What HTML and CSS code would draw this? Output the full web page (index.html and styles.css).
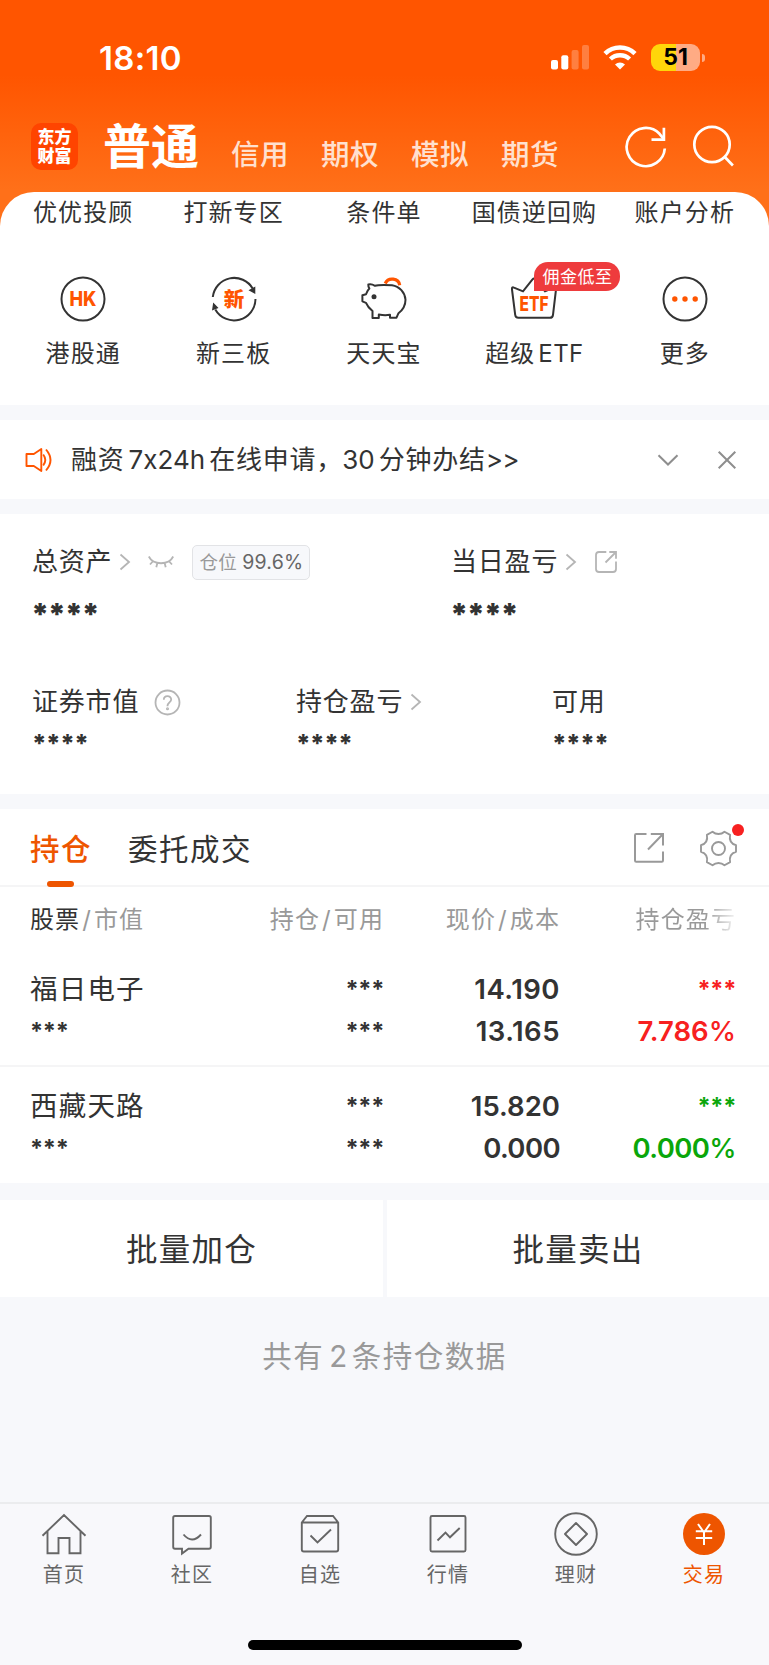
FILE: index.html
```html
<!DOCTYPE html>
<html lang="zh-CN">
<head>
<meta charset="utf-8">
<title>交易</title>
<link rel="stylesheet" href="styles.css">
</head>
<body>
<header class="top">
  <div class="status">
    <span class="clock">18:10</span>
    <svg class="signal" width="39" height="25" viewBox="0 0 39 25" fill="#fff"><rect x="0" y="15" width="7" height="9.5" rx="2"/><rect x="10.3" y="10.3" width="7" height="14.2" rx="2"/><rect x="20.6" y="5" width="7" height="19.5" rx="2" opacity=".25"/><rect x="31" y="0" width="7" height="24.5" rx="2" opacity=".25"/></svg>
    <svg class="wifi" width="34" height="25" viewBox="0 0 34 25" fill="none" stroke="#fff"><path d="M2 8.6a21.6 21.6 0 0 1 30 0" stroke-width="4.6"/><path d="M7.4 14a14 14 0 0 1 19.2 0" stroke-width="4.4"/><path d="M17 24.5l-5-5a7.2 7.2 0 0 1 10 0z" fill="#fff" stroke="none"/></svg>
    <div class="battery"><span>51</span></div>
    <i class="battery-tip"></i>
  </div>
  <nav class="accounts">
    <div class="logo"><span>东方</span><span>财富</span></div>
    <span class="account on">普通</span>
    <span class="account">信用</span>
    <span class="account">期权</span>
    <span class="account">模拟</span>
    <span class="account">期货</span>
    <svg class="refresh" width="44" height="44" viewBox="0 0 44 44" fill="none" stroke="#fff" stroke-width="2.7"><path d="M40.8 23.500A19.1 19.1 0 1 1 35.500 8.800L39.500 13.700"/><path d="M39.900 2.800V14.700H27.500"/></svg>
    <svg class="search" width="44" height="44" viewBox="0 0 44 44" fill="none" stroke="#fff" stroke-width="2.700"><circle cx="20" cy="19.500" r="17.700"/><path d="M32.300 31.500l8.600 9"/></svg>
  </nav>
</header>

<main>
  <section class="sheet">
    <div class="labels first"><span>优优投顾</span><span>打新专区</span><span>条件单</span><span>国债逆回购</span><span>账户分析</span></div>
    <div class="icons">
      <div><svg width="48" height="48" viewBox="0 0 48 48"><circle cx="24" cy="24" r="21.500" fill="none" stroke="#333" stroke-width="2"/><text class="hk" x="24" y="31.300" text-anchor="middle" textLength="27" lengthAdjust="spacingAndGlyphs">HK</text></svg></div>
      <div><svg width="48" height="48" viewBox="0 0 48 48"><g fill="none" stroke="#333" stroke-width="2"><path d="M2.800 22A21.500 21.500 0 0 1 42.700 13.500"/><path d="M45.500 24A21.500 21.500 0 0 1 5.300 34.500"/></g><path d="M45.300 11.500v7.500l-6.800-3.800zM2 35.500l1.200-8 5.300 5.500z" fill="#333"/><text class="xin" x="24" y="31.500" text-anchor="middle">新</text></svg></div>
      <div><svg width="48" height="48" viewBox="0 0 48 48" fill="none" stroke="#333" stroke-width="2" stroke-linejoin="round"><path d="M8.300 9.500c2.600-.6 4.600 0 6.700 1.300 3.500-1.300 10-1 17-.6 7.500 1 13 7.500 13.500 14.500 0 5.500-2.500 10-7 13.500l-2 4.500h-6.500v-2.900c-4 .7-7.700.4-11.200-.2v3.500h-6.300V36c-3-2.500-5.200-5-6.500-8.200l-3.600-1.500v-6l3.600-1c.7-2.300 1.600-4.200 3.400-5.800-.9-1.300-1.200-2.600-1.100-4z"/><circle cx="14" cy="21.800" r="2.500" fill="#333" stroke="none"/><path d="M25.200 8.500c3-6.600 13.500-5.500 14.500 1.800" stroke="#ff5500" stroke-width="3.200"/></svg></div>
      <div class="etf"><svg width="48" height="48" viewBox="0 0 48 48"><path d="M2 14.500q-.4-3 2-1.800l9 3.700 9.500-12q1.500-1.700 3 0l9.500 12 9-3.700q2.400-1.200 2 1.800l-3 25.300q-.3 3-3.200 3H8.400q-3 0-3.200-3z" fill="none" stroke="#333" stroke-width="2"/><text class="etf-text" x="24" y="35.500" text-anchor="middle" textLength="29" lengthAdjust="spacingAndGlyphs">ETF</text></svg><b class="badge">佣金低至</b></div>
      <div><svg width="48" height="48" viewBox="0 0 48 48"><circle cx="24" cy="24" r="21.500" fill="none" stroke="#333" stroke-width="2"/><g fill="#ff5500"><circle cx="13.800" cy="24" r="2.700"/><circle cx="24" cy="24" r="2.700"/><circle cx="34.200" cy="24" r="2.700"/></g></svg></div>
    </div>
    <div class="labels"><span>港股通</span><span>新三板</span><span>天天宝</span><span>超级<em>ETF</em></span><span>更多</span></div>
  </section>

  <section class="notice">
    <svg class="horn" width="28" height="26" viewBox="0 0 28 26" fill="none" stroke="#ff5500" stroke-width="1.900" stroke-linejoin="round"><path d="M1.500 7h7.300l7.500-5v22l-7.500-5H1.500z"/><path d="M18.200 7.500q4.200 5.500 0 11M21 2.500q9 10.500 0 21"/></svg>
    <p>融资<em>7x24h</em>在线申请，<em class="minutes">30</em>分钟办结<i>&gt;&gt;</i></p>
    <svg width="22" height="22" viewBox="0 0 22 22" fill="none" stroke="#8e8e8e" stroke-width="2"><path d="M1.500 6.300l9.500 9.200 9.500-9.200"/></svg>
    <svg class="close" width="22" height="22" viewBox="0 0 22 22" fill="none" stroke="#8e8e8e" stroke-width="2"><path d="M2.700 2.700l16.600 16.600M19.300 2.700L2.700 19.300"/></svg>
  </section>

  <section class="assets">
    <div class="pair">
      <div>
        <h3>总资产<svg class="chev" width="12" height="18" viewBox="0 0 12 18"><path d="M1.500 1.500l8.500 7.500-8.500 7.500"/></svg>
          <svg class="eye" width="26" height="14" viewBox="0 0 26 14"><path d="M.8 1.500c4.500 9 20 9 24.400 0M5.200 6l-3.200 3.500M9.300 8.200l-1 4M16.700 8.200l1 4M20.800 6l3.200 3.500"/></svg>
          <span class="tag">仓位 <b>99.6%</b></span></h3>
        <p class="stars big">****</p>
      </div>
      <div>
        <h3>当日盈亏<svg class="chev" width="12" height="18" viewBox="0 0 12 18"><path d="M1.500 1.500l8.500 7.500-8.500 7.500"/></svg>
          <svg class="share" width="24" height="24" viewBox="0 0 24 24"><path d="M12.300 2H5Q2 2 2 5v14q0 3 3 3h14q3 0 3-3v-7.500M15.300 2H22v6.800M22 2L11.500 12.500"/></svg></h3>
        <p class="stars big">****</p>
      </div>
    </div>
    <div class="triple">
      <div><h3>证券市值<svg class="help" width="27" height="27" viewBox="0 0 27 27"><circle cx="13.500" cy="13.500" r="12"/><path d="M9.800 10.800c0-5 7.400-4.800 7.400-.3 0 2.800-3.700 3-3.700 6.300v.5"/><circle cx="13.500" cy="19.800" r=".6"/></svg></h3><p class="stars">****</p></div>
      <div><h3>持仓盈亏<svg class="chev" width="12" height="18" viewBox="0 0 12 18"><path d="M1.500 1.500l8.500 7.500-8.500 7.500"/></svg></h3><p class="stars">****</p></div>
      <div><h3>可用</h3><p class="stars">****</p></div>
    </div>
  </section>

  <section class="holdings">
    <div class="tabs">
      <span class="tab on">持仓</span><span class="tab">委托成交</span>
      <svg class="export" width="32" height="32" viewBox="0 0 32 32" fill="none" stroke="#999" stroke-width="2"><path d="M13.500 2H3.200Q2 2 2 3.200V28.500q0 1.200 1.200 1.200H28.800q1.200 0 1.200-1.200V19.500M17.800 2H30V13.500M29.500 2.500L15 17.500"/></svg>
      <div class="gear"><svg width="37" height="37" viewBox="0 0 37 37" fill="none" stroke="#999" stroke-width="1.900"><path d="M12.500 1.700c3.500 3.100 8.500 3.100 12 0l5.600 3.200c-1 5.200 1.100 8.900 5.900 10.300v6.600c-4.800 1.400-6.900 5.100-5.900 10.300l-5.600 3.200c-3.500-3.100-8.500-3.100-12 0l-5.600-3.200c1-5.200-1.100-8.900-5.900-10.300v-6.600c4.800-1.400 6.900-5.100 5.900-10.300z" stroke-linejoin="round"/><circle cx="18.500" cy="18.500" r="6.500"/></svg><i></i></div>
    </div>
    <div class="row head"><span><b>股票</b><u>/</u>市值</span><span>持仓<u>/</u>可用</span><span>现价<u>/</u>成本</span><span class="fade">持仓盈亏</span></div>
    <div class="row stock">
      <span class="name">福日电子</span><span class="mask">***</span><span class="num loose">14.190</span><span class="mask red">***</span>
      <span class="mask">***</span><span class="mask">***</span><span class="num loose">13.165</span><span class="num red">7.786<b>%</b></span>
    </div>
    <div class="row stock">
      <span class="name">西藏天路</span><span class="mask">***</span><span class="num">15.820</span><span class="mask green">***</span>
      <span class="mask">***</span><span class="mask">***</span><span class="num tight">0.000</span><span class="num tight green">0.000<b>%</b></span>
    </div>
  </section>

  <section class="batch"><span>批量加仓</span><span>批量卖出</span></section>
  <p class="summary">共有<em>2</em>条持仓数据</p>
</main>

<footer class="bar">
  <div class="items">
    <div><svg width="46" height="44" viewBox="0 0 46 44"><path d="M1.500 23.800L23 3l21.500 20.800M6.500 19.500v21.800h11V26h11v15.300h11V19.500"/></svg><span>首页</span></div>
    <div><svg width="46" height="44" viewBox="0 0 46 44"><path d="M6 4h34q1.800 0 1.800 1.800V35q0 1.700-1.800 1.700H19.500L13 41.500v-4.800H6q-1.800 0-1.800-1.700V5.800Q4.200 4 6 4z"/><path d="M14.500 22.500q8.500 10 17.500 0"/></svg><span>社区</span></div>
    <div><svg width="46" height="44" viewBox="0 0 46 44"><path d="M4.800 10.500L10 4h26l5.200 6.500v27q0 2-2 2H6.800q-2 0-2-2zM4.800 10.500h36.400M13.500 23.500l7 7L34 17.500"/></svg><span>自选</span></div>
    <div><svg width="46" height="44" viewBox="0 0 46 44"><rect x="5.500" y="4" width="35" height="35.500" rx="1.500"/><path d="M12.500 28.500l8-8 4.500 4.800 9.700-9.300"/></svg><span>行情</span></div>
    <div><svg width="46" height="44" viewBox="0 0 46 44"><circle cx="23" cy="22" r="20.800"/><path d="M23 11l11 11-11 11-11-11z" stroke-linejoin="round"/></svg><span>理财</span></div>
    <div class="on"><svg width="46" height="44" viewBox="0 0 46 44"><circle cx="23" cy="22" r="21" class="disc"/><path class="yen" d="M17 12l6 8.500L29 12M23 20.500V33M14.800 19.300h16.400M14.800 26h16.400"/></svg><span>交易</span></div>
  </div>
  <div class="home"></div>
</footer>
</body>
</html>
```
FILE: styles.css
```css
* { box-sizing: border-box; margin: 0; padding: 0; }
body {
  width: 769px; height: 1665px; overflow: hidden;
  display: flex; flex-direction: column;
  background: #f7f8fb; color: #333;
  font-family: Inter, "Noto Sans CJK SC", sans-serif;
}
em, i { font-style: normal; }
u { text-decoration: none; }
svg { display: block; flex: none; }

.top { height: 230px; flex: none; background: linear-gradient(#ff5500 75px, #ff7019 190px); }
.status { height: 92px; padding: 23px 0 0 99px; display: flex; align-items: center; color: #fff; }
.clock { width: 452px; font-size: 33px; font-weight: 600; line-height: 40px; letter-spacing: .3px; }
.wifi { margin-left: 13px; }
.battery {
  width: 49px; height: 27px; margin-left: 14px; border-radius: 9px;
  background: linear-gradient(90deg, #ffd60a 50.500%, #ffab84 50.500%);
  color: #000; font-size: 23px; font-weight: 700; line-height: 27px; text-align: center;
}
.battery-tip { width: 3px; height: 8px; margin-left: 1.500px; border-radius: 0 3px 3px 0; background: #ffab84; }
.accounts { height: 100px; padding: 0 0 0 31px; display: flex; align-items: center; }
.logo {
  width: 47px; height: 47px; margin: 9px 25px 0 0; padding-top: 5px; border-radius: 10px; background: #ff4400;
  display: flex; flex-direction: column; align-items: center;
  color: #fff; font-size: 17px; font-weight: 900; line-height: 19px;
}
.account { flex: none; width: 90px; margin-top: 25px; font-size: 28.500px; font-weight: 500; line-height: 40px; letter-spacing: .5px; color: #ffe0cf; }
.account.on { width: 128px; margin-top: 9px; font-size: 48px; font-weight: 700; line-height: 60px; letter-spacing: 0; color: #fff; }
.refresh { margin: 9px 24px 0 33px; }
.search { margin-top: 9px; }

main { flex: 1; margin-top: -38px; }
.sheet { height: 213px; background: #fff; border-radius: 34px 34px 0 0; padding: 0 9px 0 8px; }
.labels { display: grid; grid-template-columns: repeat(5, 1fr); text-align: center; font-size: 24px; line-height: 32px; letter-spacing: 1.100px; white-space: nowrap; }
.labels em { margin-left: 3px; letter-spacing: .4px; }
.labels.first { padding-top: 5px; }
.icons { display: grid; grid-template-columns: repeat(5, 1fr); justify-items: center; height: 48px; margin: 46px 0 15px; }
.etf { position: relative; }
.badge {
  position: absolute; left: 24px; top: -13px; width: 86px; height: 29px;
  border-radius: 14px 14px 14px 0; background: #ee3b3d; color: #fff;
  font-size: 17px; font-weight: 400; line-height: 30px; letter-spacing: .5px; text-align: center;
}
.hk { font-size: 20.500px; font-weight: 800; fill: #ff5500; }
.xin { font-size: 20.500px; font-weight: 900; fill: #ff5500; }
.etf-text { font-size: 20.500px; font-weight: 800; fill: #ff5500; }

.notice { height: 79px; margin: 15px 0; padding: 0 31px 0 25px; background: #fff; display: flex; align-items: center; }
.notice p { flex: 1; margin-left: 18px; font-size: 26px; line-height: 40px; letter-spacing: .8px; white-space: nowrap; }
.notice em { margin: 0 4px 0 4px; letter-spacing: 0; }
.notice .minutes { margin: 0 4px 0 -1px; }
.notice i { margin-left: 0; letter-spacing: -.8px; }
.close { margin-left: 37px; }

.assets { height: 280px; padding: 28px 32px 0; background: #fff; }
.pair { display: grid; grid-template-columns: 419px 1fr; height: 140px; }
.triple { display: grid; grid-template-columns: 264px 256px 1fr; }
h3 { height: 40px; display: flex; align-items: center; font-size: 26px; font-weight: 400; letter-spacing: .8px; line-height: 40px; }
h3 svg { fill: none; stroke: #b5b5b5; stroke-width: 1.800; }
.chev { margin-left: 7px; }
.eye { margin-left: 17px; }
.share { margin-left: 17px; }
.help { margin-left: 15px; }
.tag { height: 35px; width: 118px; margin-left: 18px; border: 1.500px solid #e2e3e6; border-radius: 5px; background: #f7f8fb; color: #999; font-size: 18.500px; letter-spacing: .2px; line-height: 33px; text-align: center; white-space: nowrap; }
.tag b { color: #666; font-weight: 400; font-size: 19.500px; }
.stars { height: 30px; margin-top: 6px; font-size: 25px; font-weight: 800; line-height: 30px; letter-spacing: -.5px; }
.stars.big { margin: 17px 0 0 -1px; font-size: 30px; font-weight: 900; letter-spacing: -1.400px; }

.holdings { height: 374px; margin-top: 15px; background: #fff; }
.tabs { height: 78px; border-bottom: 2px solid #f5f5f6; padding: 0 32px 0 30px; display: flex; align-items: center; }
.tab { position: relative; margin-right: 37px; font-size: 29.500px; line-height: 72px; padding-top: 3px; letter-spacing: 1.500px; }
.tab.on { color: #ee5500; font-weight: 500; margin-right: 36px; }
.tab.on::after { content: ""; position: absolute; left: 17px; bottom: -2px; width: 27px; height: 6px; border-radius: 3px; background: #ee5500; }
.export { margin: 2px 35px 0 auto; }
.gear { position: relative; margin-top: 2px; }
.gear i { position: absolute; right: -7px; top: -6px; width: 12px; height: 12px; border-radius: 50%; background: #f72020; }
.row { display: grid; grid-template-columns: 204px 150px 176px 176px; padding: 0 33px 0 30px; text-align: right; }
.row > span:nth-child(4n+1) { text-align: left; }
.head { height: 64px; line-height: 65px; font-size: 24px; color: #999; letter-spacing: 1.100px; }
.head b { font-weight: 400; color: #333; }
.head u { margin: 0 2px; }
.fade { background: linear-gradient(90deg, #999 145px, #fff 180px); -webkit-background-clip: text; background-clip: text; color: transparent; }
.stock { height: 116px; padding-top: 17px; grid-template-rows: 42px 42px; line-height: 42px; border-bottom: 2px solid #f5f5f6; }
.stock + .stock { height: 116px; border: 0; padding-top: 18px; }
.name { font-size: 27.500px; letter-spacing: 1.200px; }
.num { font-size: 27.500px; font-weight: 600; }
.num b { font-weight: 500; }
.loose { letter-spacing: .5px; }
.tight { letter-spacing: -.6px; }
.mask { font-size: 23.500px; font-weight: 700; line-height: 41px; letter-spacing: -.3px; }
.red { color: #f72020; }
.green { color: #0aa60a; }

.batch { height: 97px; margin-top: 17px; display: grid; grid-template: 97px / 383px 1fr; gap: 4px; }
.batch span { background: #fff; padding-top: 2px; text-align: center; font-size: 31.500px; line-height: 95px; letter-spacing: 1.200px; }
.summary { margin-top: 38px; text-align: center; color: #999; font-size: 29.500px; line-height: 42px; letter-spacing: 1.500px; }
.summary em { margin: 0 3px 0 5px; }

.bar { height: 163px; flex: none; border-top: 2px solid #ebecee; background: #f8f8fb; }
.items { display: grid; grid-template-columns: repeat(6, 1fr); padding: 8px 1px 0 0; color: #666; }
.items div { display: flex; flex-direction: column; align-items: center; }
.items svg { fill: none; stroke: #666; stroke-width: 1.900; }
.items .disc { fill: #ee5500; stroke: none; }
.items .yen { stroke: #fff; stroke-width: 2; }
.items span { margin-top: 4px; font-size: 20px; line-height: 30px; letter-spacing: 1.200px; }
.items .on { color: #ee5500; }
.home { width: 274px; height: 10px; margin: 50px auto 0; border-radius: 5px; background: #000; }
```
